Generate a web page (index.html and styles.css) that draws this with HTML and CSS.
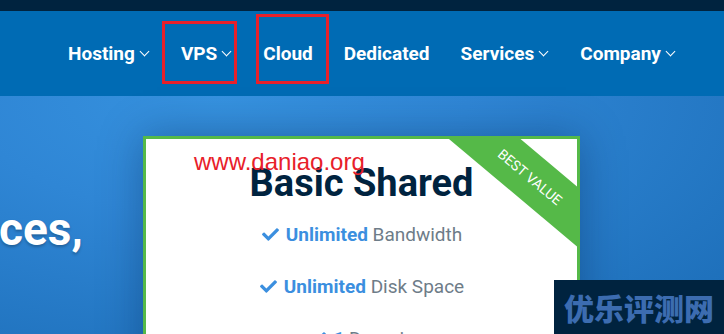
FILE: index.html
```html
<!DOCTYPE html>
<html lang="en">
<head>
  <meta charset="UTF-8" />
  <title>Hosting Plans</title>
  <link rel="stylesheet" href="styles.css">
</head>
<body>

  <div class="topbar"></div>

  <nav class="nav">
    <a class="nav-item" href="#">Hosting <span class="caret"></span></a>
    <a class="nav-item" href="#">VPS <span class="caret"></span></a>
    <a class="nav-item" href="#">Cloud</a>
    <a class="nav-item" href="#">Dedicated</a>
    <a class="nav-item" href="#">Services <span class="caret"></span></a>
    <a class="nav-item" href="#">Company <span class="caret"></span></a>

    <!-- annotation boxes -->
    <div class="mark mark-vps"></div>
    <div class="mark mark-cloud"></div>
  </nav>

  <section class="hero">
    <h1 class="hero-title">ces,</h1>

    <div class="card">
      <div class="ribbon">BEST VALUE</div>
      <div class="stamp">www.daniao.org</div>
      <h2 class="plan">Basic Shared</h2>
      <ul class="features">
        <li><svg class="tick" viewBox="0 0 512 512"><path d="M173.9 439.4L7.5 273c-10-10-10-26.2 0-36.2l36.2-36.2c10-10 26.2-10 36.2 0L192 312.7 432.1 72.6c10-10 26.2-10 36.2 0l36.2 36.2c10 10 10 26.2 0 36.2L210.1 439.4c-10 10-26.2 10-36.2 0z"/></svg><b>Unlimited</b> Bandwidth</li>
        <li><svg class="tick" viewBox="0 0 512 512"><path d="M173.9 439.4L7.5 273c-10-10-10-26.2 0-36.2l36.2-36.2c10-10 26.2-10 36.2 0L192 312.7 432.1 72.6c10-10 26.2-10 36.2 0l36.2 36.2c10 10 10 26.2 0 36.2L210.1 439.4c-10 10-26.2 10-36.2 0z"/></svg><b>Unlimited</b> Disk Space</li>
        <li><svg class="tick" viewBox="0 0 512 512"><path d="M173.9 439.4L7.5 273c-10-10-10-26.2 0-36.2l36.2-36.2c10-10 26.2-10 36.2 0L192 312.7 432.1 72.6c10-10 26.2-10 36.2 0l36.2 36.2c10 10 10 26.2 0 36.2L210.1 439.4c-10 10-26.2 10-36.2 0z"/></svg><b>1</b> Domain</li>
      </ul>
    </div>
  </section>

  <div class="badge">优乐评测网</div>

</body>
</html>
```

FILE: styles.css
```css
body {
  margin: 0;
  font-family: Roboto, "Noto Sans", sans-serif;
  height: 334px;
  overflow: hidden;
  background: #2a82d2;
}

.topbar {
  height: 11px;
  background: #00233f;
}

.nav {
  position: relative;
  height: 85px;
  background: #006bb4;
  display: flex;
  align-items: center;
  gap: 31px;
  padding-left: 68px;
}

.nav-item {
  color: #fff;
  text-decoration: none;
  font-weight: 700;
  font-size: 19px;
  display: flex;
  align-items: center;
  gap: 3px;
}

.caret {
  width: 6px;
  height: 6px;
  border-right: 1.5px solid #fff;
  border-bottom: 1.5px solid #fff;
  transform: rotate(45deg);
  margin: -5px 2px 0 3px;
}

.mark {
  position: absolute;
  border: 3px solid #e8202a;
}

.mark-vps {
  left: 162px;
  top: 10px;
  width: 69px;
  height: 57px;
}

.mark-cloud {
  left: 256px;
  top: 3px;
  width: 67px;
  height: 64px;
}

.hero {
  height: 238px;
  background: radial-gradient(ellipse at 30% 0%, #3692df 0%, #2f86d5 35%, #1b6cb6 100%);
  display: flex;
  align-items: flex-start;
  padding-top: 40px;
  box-sizing: border-box;
}

.hero-title {
  margin: 66px 0 0 -1px;
  width: 144px;
  color: #fff;
  font-size: 46px;
  font-weight: 700;
  text-shadow: 0 2px 3px rgba(0, 0, 0, 0.25);
}

.card {
  position: relative;
  width: 431px;
  height: 240px;
  background: #fff;
  border: 3px solid #55b948;
  overflow: hidden;
  box-shadow: 0 0 40px rgba(0, 30, 70, 0.35);
  text-align: center;
}

.ribbon {
  position: absolute;
  left: 284px;
  top: 15px;
  width: 200px;
  height: 46px;
  line-height: 46px;
  background: #55b948;
  color: #fff;
  font-size: 14px;
  transform: rotate(40deg);
}

.stamp {
  position: absolute;
  left: 48px;
  top: 9px;
  color: #e8202a;
  font-family: "Liberation Sans", Arial, sans-serif;
  font-size: 24px;
}

.plan {
  margin: 23px 0 0;
  color: #00233f;
  font-size: 38px;
  font-weight: 700;
  line-height: 42px;
}

.features {
  list-style: none;
  margin: 19px 0 0;
  padding: 0;
  font-size: 19px;
  color: #6e7c88;
}

.features li {
  height: 52px;
}

.features b {
  color: #3b8fdf;
}

.tick {
  width: 19px;
  height: 17px;
  fill: #3b8fdf;
  margin-right: 6px;
  vertical-align: -2px;
}

.badge {
  position: absolute;
  left: 554px;
  top: 280px;
  width: 170px;
  height: 54px;
  background: #00233f;
  color: #3c6cb0;
  font-family: "Noto Sans CJK SC", sans-serif;
  font-weight: 900;
  font-size: 30px;
  line-height: 54px;
  text-align: center;
}
```
